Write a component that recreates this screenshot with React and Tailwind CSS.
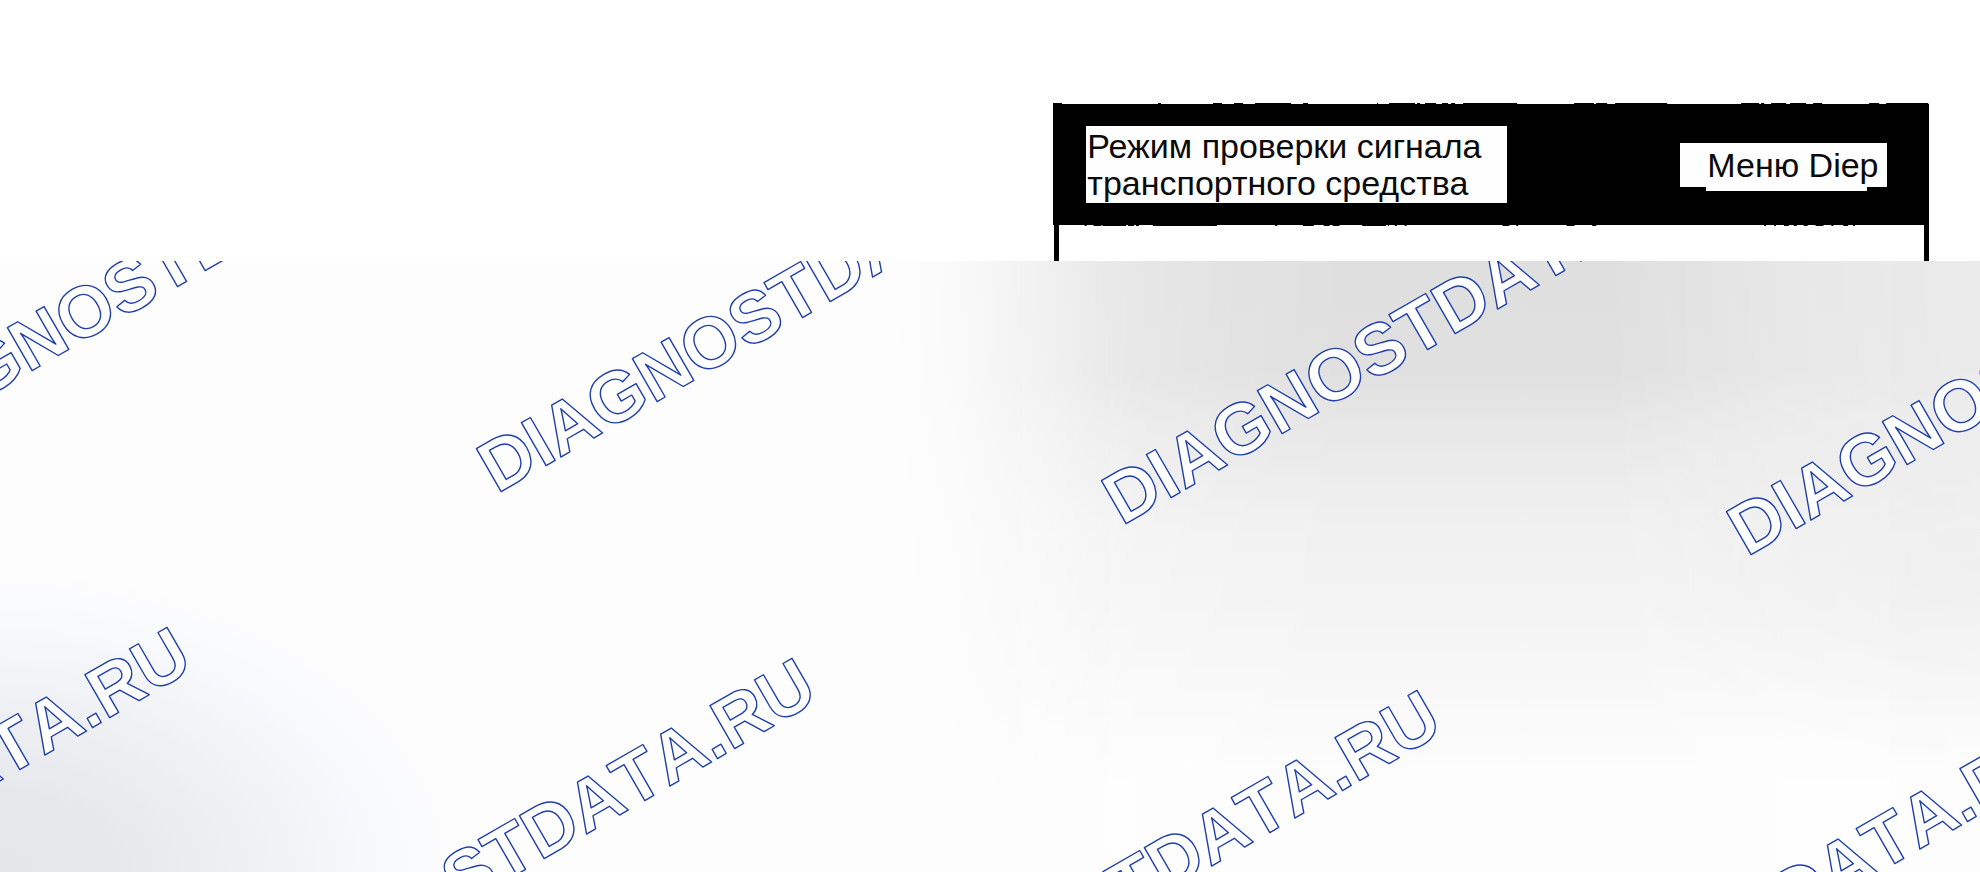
const STAMP = "DIAGNOSTDATA.RU";

const stamps = [
  [-128, 463],
  [497, 494],
  [1122, 526],
  [1747, 557],
  [-414, 1020],
  [211, 1051],
  [836, 1083],
  [1461, 1114],
];

const topDashes = [
  [0, 9], [105, 3], [160, 9], [181, 9], [202, 36], [250, 5], [324, 1], [336, 26],
  [364, 3], [372, 11], [389, 6], [398, 4], [410, 54], [447, 6], [521, 20], [543, 11],
  [562, 52], [688, 18], [708, 3], [718, 15], [737, 16], [760, 9], [816, 10], [833, 42],
];

const bottomDashes = [
  [26, 2], [35, 8], [44, 24], [70, 6], [78, 3], [95, 30], [124, 24], [148, 12],
  [219, 2], [247, 11], [268, 6], [277, 7], [307, 24], [333, 1], [340, 2], [350, 2],
  [449, 7], [463, 2], [514, 8], [540, 4], [714, 2], [724, 2], [734, 5], [744, 3],
  [754, 4], [766, 8], [782, 2], [794, 5], [804, 2],
];

function Dashes({ items, className }) {
  return (
    <svg aria-hidden="true" className={className} viewBox="0 0 875 2" preserveAspectRatio="none">
      {items.map(([x, w]) => (
        <rect key={x} x={x} y="0" width={w} height="2" />
      ))}
    </svg>
  );
}

function Header() {
  return (
    <header className="h-[261px] bg-white pt-[104px]">
      <div className="relative mr-[2.6%] ml-[53.2%] flex h-[157px] flex-col">
        <Dashes items={topDashes} className="absolute -top-px left-0 h-px w-full" />
        <div className="flex h-[121px] items-center justify-between bg-black pr-[42px] pl-[33px]">
          <h1 className="h-[77px] w-[421px] bg-[#fefefe] py-[2px] pl-px text-[34px] leading-[37px] text-[#0a0a0a]">
            Режим проверки сигнала
            <br />
            транспортного средства
          </h1>
          <button
            type="button"
            className="relative h-11 w-[207px] bg-[#fefefe] pr-2 text-right text-[34px] leading-[44px] text-[#0a0a0a]"
          >
            <span className="absolute top-full left-[26px] h-1 w-[161px] bg-[#fefefe]" />
            Меню Diep
          </button>
        </div>
        <div className="relative ml-px flex-1 border-x-[5px] border-black">
          <Dashes items={bottomDashes} className="absolute top-0 left-0 h-px w-full" />
        </div>
      </div>
    </header>
  );
}

function Watermarks() {
  return (
    <svg aria-hidden="true" className="absolute inset-0 h-full w-full overflow-hidden">
      {stamps.map(([x, y]) => (
        <text
          key={x}
          transform={`translate(${x} ${y - 261}) rotate(-30)`}
          strokeLinejoin="round"
          className="fill-white stroke-[#1f3fab] stroke-[1.4px] text-[72px] font-bold [font-kerning:none]"
        >
          {STAMP}
        </text>
      ))}
    </svg>
  );
}

export default function App() {
  return (
    <div className="flex min-h-screen flex-col overflow-hidden bg-white font-['Liberation_Sans',Arial,sans-serif]">
      <Header />
      <main className="relative flex-1 overflow-hidden bg-[#fdfdfd]">
        <div className="absolute inset-y-0 right-0 left-[45%] bg-[linear-gradient(to_bottom,#dfdfdf_0%,#e0e0e0_18%,#e7e7e7_27%,#ececec_36%,#f1f1f1_45%,#f3f3f3_55%,#f7f7f7_68%,#fafafa_76%,#fdfdfd_86%)] [mask-image:linear-gradient(to_right,transparent_0%,rgba(0,0,0,0.1)_6%,rgba(0,0,0,0.45)_15%,rgba(0,0,0,0.75)_22%,rgba(0,0,0,0.9)_32%,black_42%,black_66%,rgba(0,0,0,0.75)_82%,rgba(0,0,0,0.6)_100%)]" />
        <div className="absolute inset-0 bg-[radial-gradient(ellipse_360px_200px_at_100%_50%,#00000007_0%,#00000004_50%,#00000000_100%)]" />
        <div className="absolute inset-0 bg-[radial-gradient(ellipse_490px_320px_at_0%_100%,#e5e6ea_0%,#e7e8ec_25%,#f2f3f6_60%,#f9fafc_80%,#fdfdfd00_100%)]" />
        <Watermarks />
      </main>
    </div>
  );
}
